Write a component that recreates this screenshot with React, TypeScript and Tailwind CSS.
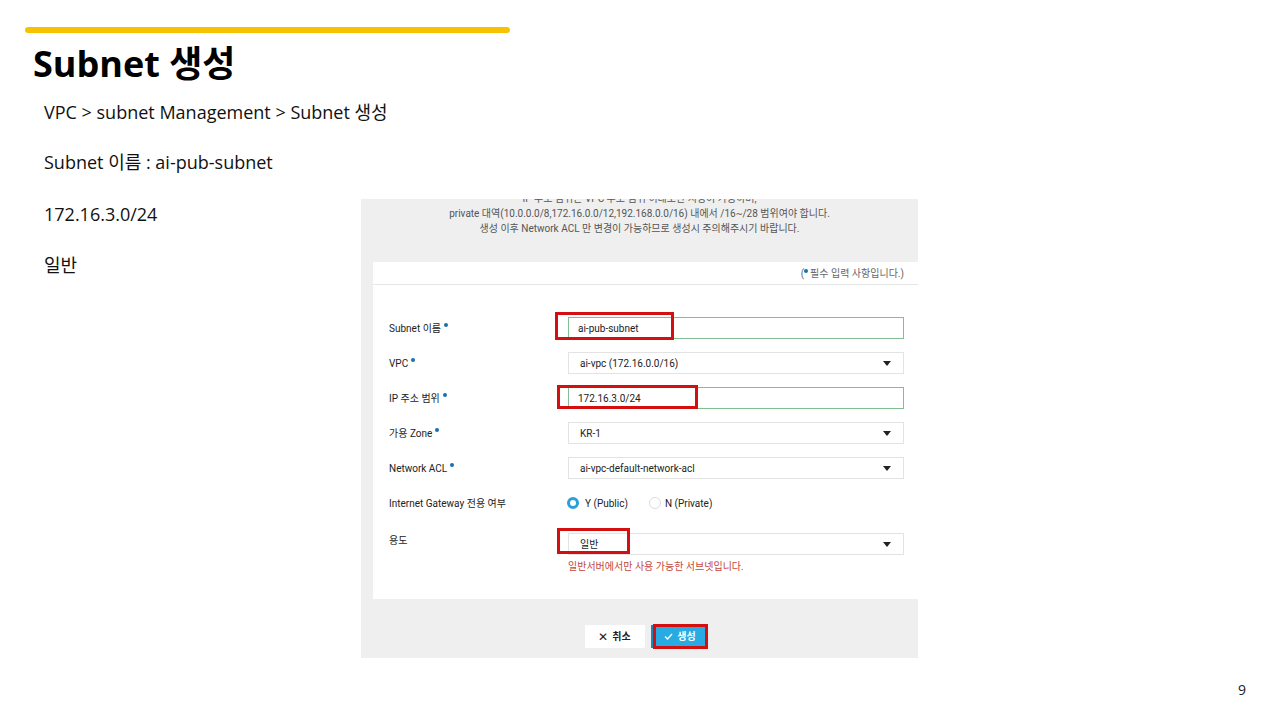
const slideFont = { fontFamily: '"Open Sans", "Noto Sans CJK KR", sans-serif' };
const uiFont = { fontFamily: 'Roboto, "Noto Sans CJK KR", sans-serif' };

function Req() {
  return <span className="ml-[3px] inline-block h-[4px] w-[4px] -translate-y-[5px] rounded-full bg-[#1b6fae]" />;
}

function RedBox({ className }: { className: string }) {
  return <div className={`pointer-events-none absolute border-[3px] border-[#d40f0f] ${className}`} />;
}

function Caret() {
  return (
    <svg width="8" height="5" viewBox="0 0 8 5" className="mr-[4px]">
      <path d="M0 0h8L4 5z" fill="#222" />
    </svg>
  );
}

function Select({ value }: { value: string }) {
  return (
    <div className="flex h-[22px] items-center justify-between border border-[#e3e3e3] bg-white pl-[11px] pr-[8px] text-[10px] text-[#222]">
      <span>{value}</span>
      <Caret />
    </div>
  );
}

function Row({ label, req = true, children, top = false }: { label: string; req?: boolean; children: React.ReactNode; top?: boolean }) {
  return (
    <div className={`flex ${top ? 'mt-[6px] items-start' : 'items-center'}`}>
      <div className={`w-[179px] text-[10px] text-[#222] ${top ? 'pt-[0px]' : ''}`}>
        {label}
        {req && <Req />}
      </div>
      <div className="flex-1">{children}</div>
    </div>
  );
}

export default function App() {
  return (
    <div className="flex h-[720px] w-[1280px] flex-col bg-white" style={slideFont}>
      <div className="ml-[25px] mt-[27px] h-[6px] w-[485px] rounded-sm bg-[#f7c300]" />
      <h1 className="ml-[33px] mt-[9px] text-[36px] font-bold leading-[44px] text-black" style={{ fontFamily: '"Open Sans", "Noto Sans CJK KR", sans-serif' }}>Subnet 생성</h1>

      <div className="flex">
        <div className="ml-[44px] w-[317px] pt-[13px] text-[18px] text-[#111]">
          <p className="whitespace-nowrap leading-[26px]">VPC &gt; subnet Management &gt; Subnet 생성</p>
          <p className="mt-[24px] leading-[26px]">Subnet 이름 : ai-pub-subnet</p>
          <p className="mt-[26px] leading-[26px]">172.16.3.0/24</p>
          <p className="mt-[25px] leading-[26px]">일반</p>
        </div>

        <div className="mt-[113px] h-[459px] w-[557px] overflow-hidden bg-[#efefef]" style={uiFont}>
          <div className="-mt-[8px] text-center text-[10px] leading-[15px] text-[#555]">
            <p>IP 주소 범위는 VPC 주소 범위 이내로만 지정이 가능하며,</p>
            <p>private 대역(10.0.0.0/8,172.16.0.0/12,192.168.0.0/16) 내에서 /16~/28 범위여야 합니다.</p>
            <p>생성 이후 Network ACL 만 변경이 가능하므로 생성시 주의해주시기 바랍니다.</p>
          </div>

          <div className="ml-[12px] mt-[26px] h-[337px] bg-white">
            <div className="flex h-[23px] items-center justify-end border-b border-[#e6e6e6] pr-[14px] text-[10px] text-[#666]">
              (<span className="mr-[2px] inline-block h-[4px] w-[4px] -translate-y-[2px] rounded-full bg-[#1b6fae]" />필수 입력 사항입니다.)
            </div>

            <div className="flex flex-col gap-[13px] pl-[16px] pr-[14px] pt-[32px]">
              <Row label="Subnet 이름">
                <div className="relative">
                  <div className="flex h-[22px] items-center border border-[#7fbf92] pl-[9px] text-[10px] text-[#222]">ai-pub-subnet</div>
                  <RedBox className="-left-[13px] -top-[5px] h-[28px] w-[119px]" />
                </div>
              </Row>
              <Row label="VPC">
                <Select value="ai-vpc (172.16.0.0/16)" />
              </Row>
              <Row label="IP 주소 범위">
                <div className="relative">
                  <div className="flex h-[22px] items-center border border-[#7fbf92] pl-[9px] text-[10px] text-[#222]">172.16.3.0/24</div>
                  <RedBox className="-left-[11px] -top-[2px] h-[24px] w-[141px]" />
                </div>
              </Row>
              <Row label="가용 Zone">
                <Select value="KR-1" />
              </Row>
              <Row label="Network ACL">
                <Select value="ai-vpc-default-network-acl" />
              </Row>
              <Row label="Internet Gateway 전용 여부" req={false}>
                <div className="flex h-[22px] items-center text-[10px] text-[#222]">
                  <span className="ml-[-1px] inline-block h-[12px] w-[12px] rounded-full border-[3px] border-[#2b9fd8] bg-white" />
                  <span className="ml-[6px]">Y (Public)</span>
                  <span className="ml-[21px] inline-block h-[12px] w-[12px] rounded-full border border-[#dcdcdc] bg-white" />
                  <span className="ml-[4px]">N (Private)</span>
                </div>
              </Row>
              <Row label="용도" req={false} top>
                <div className="relative">
                  <Select value="일반" />
                  <RedBox className="-left-[11px] -top-[5px] h-[26px] w-[73px]" />
                  <p className="mt-[4px] text-[10px] text-[#c4463a]">일반서버에서만 사용 가능한 서브넷입니다.</p>
                </div>
              </Row>
            </div>
          </div>

          <div className="mt-[26px] flex justify-center gap-[6px] pl-[12px]">
            <div className="flex h-[23px] w-[60px] items-center justify-center gap-[4px] bg-white text-[10px] font-bold text-[#222]">
              <span className="text-[12px] font-normal">✕</span>취소
            </div>
            <div className="relative flex h-[23px] w-[56px] items-center justify-center gap-[4px] border-l-[3px] border-[#1a86bf] bg-[#27abe2] text-[10px] font-bold text-white">
              <svg width="9" height="7" viewBox="0 0 9 7"><path d="M1 3.5l2.5 2.5L8 1" stroke="white" strokeWidth="1.4" fill="none" /></svg>
              생성
              <RedBox className="-left-[1px] -top-[1px] h-[25px] w-[55px]" />
            </div>
          </div>
        </div>
      </div>

      <div className="mt-auto mb-[20px] flex justify-end pr-[34px] text-[14px] text-[#222]">9</div>
    </div>
  );
}
